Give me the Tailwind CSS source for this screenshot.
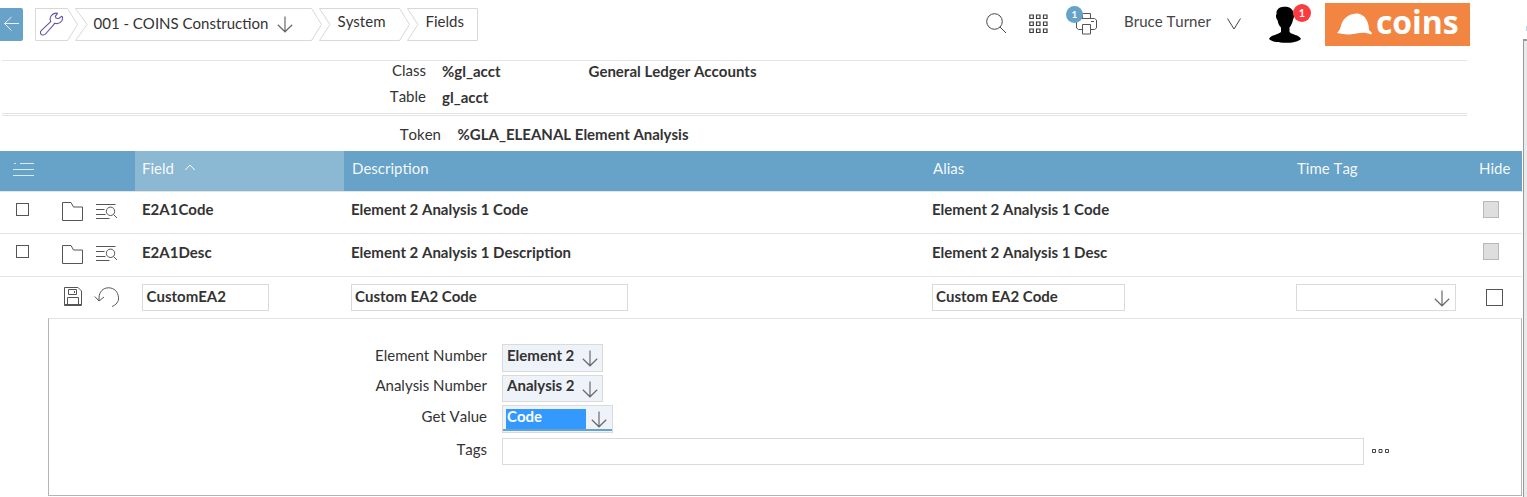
<!DOCTYPE html>
<html lang="en">
<head>
<meta charset="utf-8">
<title>Fields</title>
<script src="https://cdn.jsdelivr.net/npm/@tailwindcss/browser@4"></script>
</head>
<body class="bg-white overflow-hidden">
<svg class="hidden">
  <symbol id="down" viewBox="0 0 16 17"><path d="M8 .5V15.500M.8 8.800L8 15.800L15.200 8.800" fill="none" stroke="#6b6b6b" stroke-width="1.200"/></symbol>
  <symbol id="folder" viewBox="0 0 21 20"><path d="M.5 18.500V.5H9L11.500 5H20.500V18.500Z" fill="none" stroke="#555" stroke-width="1"/></symbol>
  <symbol id="find" viewBox="0 0 22 17"><path d="M0 1.500H19.500M0 6.500H8.500M0 11.500H9.500M0 15.500H13.500" fill="none" stroke="#555"/><circle cx="14.500" cy="8.300" r="4.200" fill="none" stroke="#555"/><path d="M17.500 11.500L21 15" stroke="#555"/></symbol>
</svg>
<div class="flex w-[1527px] h-[497px] font-['Lato',sans-serif] text-[15px] leading-5 text-[#333] whitespace-nowrap [font-kerning:none]">
  <main class="w-[1522px] h-full flex flex-col shrink-0">
    <header class="h-[60px] flex shrink-0">
      <div class="mt-2 w-[23px] h-[33px] bg-[#67a2c8] rounded-r-[2px] shrink-0">
        <svg class="w-[23px] h-[33px]" viewBox="0 0 23 33" fill="none" stroke="#e8f2f8" stroke-width="1"><path d="M19 15.500H4.500M11.500 9L4.500 15.500L11.500 22.500"/></svg>
      </div>
      <nav class="mt-2 ml-3 flex h-[33px] w-[443px] shrink-0">
        <div class="relative w-10">
          <svg class="absolute inset-0 overflow-visible" width="40" height="33" fill="none"><path d="M.5 .5H32.500L42.500 16.500L32.500 32.500H.5Z" stroke="#d8d8d8"/>
            <g transform="translate(5 4.500)" stroke="#6650a8" stroke-width="1.100" stroke-linejoin="round"><path d="M1.200 18.200L10.700 9.200C9.800 7.300 10 5.200 11 3.500C12.500 1.300 15 .2 17.500 .8L15.300 3.800L16.200 5.800L18.700 6L21.500 3.900C23 4 22.800 6.500 21.700 8.500C20.500 10.500 17.500 11.500 14.500 10.700L13.800 12.200L5.500 21.500C4.300 22.800 2.200 22.800 1.200 21.800C.2 20.800 .2 19.200 1.200 18.200Z"/></g>
          </svg>
        </div>
        <div class="relative w-[244px]">
          <svg class="absolute inset-0 overflow-visible" width="244" height="33" fill="none"><path d="M.5 .5H236.500L246.500 16.500L236.500 32.500H.5L12 16.500Z" stroke="#d8d8d8"/></svg>
          <div class="relative flex pl-[18.500px] pt-[5px]"><span class="w-[183.500px]">001 - COINS Construction</span><svg class="mt-[3px] w-4 h-[17px]"><use href="#down"/></svg></div>
        </div>
        <div class="relative w-[88px]">
          <svg class="absolute inset-0 overflow-visible" width="88" height="33" fill="none"><path d="M.5 .5H80.500L90.500 16.500L80.500 32.500H.5L11 16.500Z" stroke="#d8d8d8"/></svg>
          <div class="relative pl-[18.500px] pt-[3px]">System</div>
        </div>
        <div class="relative w-[71px]">
          <svg class="absolute inset-0 overflow-visible" width="71" height="33" fill="none"><path d="M.5 .5H70.500V32.500H.5L11 16.500Z" stroke="#d8d8d8"/></svg>
          <div class="relative pl-[18.500px] pt-[3px]">Fields</div>
        </div>
      </nav>
      <svg class="ml-[508px] mt-[13px] w-[21px] h-[21px] shrink-0" viewBox="0 0 21 21" fill="none" stroke="#444"><circle cx="8.500" cy="8.500" r="7.800"/><path d="M14 14L20 20"/></svg>
      <svg class="ml-[22px] mt-[14px] w-[19px] h-5 shrink-0" viewBox="0 0 19 20" fill="none" stroke="#3c3c3c" stroke-width="1.200"><path d="M.8 1h3.500v3.500H.8zM7.500 1h3.500v3.500H7.500zM14.500 1h3.500v3.500H14.500zM.8 8h3.500v3.500H.8zM7.500 8h3.500v3.500H7.500zM14.500 8h3.500v3.500H14.500zM.8 15h3.500v3.500H.8zM7.500 15h3.500v3.500H7.500zM14.500 15h3.500v3.500H14.500z"/></svg>
      <div class="relative ml-[18px] w-[34px] h-10 shrink-0">
        <svg class="absolute left-[10px] top-[13px]" width="23" height="22" fill="none" stroke="#555"><path d="M6.500 5.500V.5H14.500V5.500M6.500 16.500H2.500L.5 15V7L2.500 5.500H18.500L20.500 7V15L18.500 16.500H14.500M15 8.500H18M6.500 11.500H14.500V21H6.500Z"/></svg>
        <div class="absolute left-0 top-[6px] w-[17px] h-[17px] rounded-full bg-[#67a2c8] text-white font-bold text-[10px] leading-[16px] text-center">1</div>
      </div>
      <div class="ml-[24px] mt-[11px] w-[103px] text-[#444] shrink-0">Bruce Turner</div>
      <svg class="mt-[18px] w-[14px] h-3 shrink-0" viewBox="0 0 14 12" fill="none" stroke="#444"><path d="M.5 .5L7 11L13.500 .5"/></svg>
      <div class="relative ml-[27px] w-[44px] h-[50px] shrink-0">
        <svg class="absolute left-0 top-[6px]" width="34" height="37"><path d="M8.500 6C9.500 2 13 .8 17 .8C22 .8 25.500 3.500 25.500 8C26.500 9 26 12 25 13.500C24.500 17 23 19.500 21.500 21.500V26C24 29 31 28.500 33 33C30 36 24 36.800 17 36.800C10 36.800 4 36 1 33C3 28.500 10 29 13 26V21.500C11 19.500 10 17 9.500 14C8 12.500 7.500 9.500 8.500 8Z"/></svg>
        <div class="absolute left-[25px] top-1 w-[18px] h-[18px] rounded-full bg-[#fb3b3f] text-white font-bold text-[11px] leading-[17px] text-center">1</div>
      </div>
      <div class="ml-[13px] mt-[3px] w-[145px] h-[43px] bg-[#f38542] flex shrink-0 text-white">
        <svg class="ml-3 mt-[10px] w-[35px] h-[22px] shrink-0" viewBox="0 0 35 22" fill="#fff"><path d="M0 20C2.500 18 3.500 15 4.500 11C7 4 14 0 21 .5C28 1.500 32 9 32 17L35 20L34 21.500C29 19 24 19.500 18 20.800C12 22 6 21.500 0 20Z"/></svg>
        <div class="pl-[4px] font-['Open_Sans',sans-serif] font-bold text-[32px] leading-[38px] tracking-[-0.100px]">coins</div>
      </div>
    </header>

    <section class="ml-0.5 w-[1465px] h-[54px] border-t border-[#e4e4e4] shrink-0 flex flex-col">
      <div class="flex h-[26px] -mt-px"><span class="w-[424px] text-right">Class</span><span class="ml-4 mt-px w-[146.500px] font-bold">%gl_acct</span><span class="mt-px font-bold">General Ledger Accounts</span></div>
      <div class="flex"><span class="w-[424px] text-right">Table</span><span class="ml-4 mt-px font-bold">gl_acct</span></div>
    </section>
    <section class="w-[1467px] h-[37px] shrink-0">
      <div class="h-[3px] -mt-px ml-0.5 border-y border-[#e4e4e4]"></div>
      <div class="flex pt-[8px]"><span class="w-[441px] text-right">Token</span><span class="ml-[16.500px] font-bold">%GLA_ELEANAL Element Analysis</span></div>
    </section>

    <section class="shrink-0">
      <div class="flex h-10 bg-[#67a2c8] text-white/95">
        <svg class="ml-[13px] mt-[11px] w-[22px] h-4" viewBox="0 0 22 16" stroke="#d9ebf5"><path d="M1 1.500H3M7 1.500H21M0 7.500H21M0 13.500H21"/></svg>
        <div class="ml-[100px] w-[209px] bg-[#8bb8d3] flex pl-[7px] pt-[7px]">Field<svg class="ml-[11px] mt-[6px] w-[10px] h-[7px]" viewBox="0 0 10 7" fill="none" stroke="#fff"><path d="M.3 6L5 1L9.700 6"/></svg></div>
        <div class="w-[581px] pl-2 pt-[7px]">Description</div>
        <div class="w-[364px] pl-2 pt-[7px]">Alias</div>
        <div class="w-[182px] pl-2 pt-[7px]">Time Tag</div>
        <div class="pl-2 pt-[7px]">Hide</div>
      </div>
      <div class="flex h-[43px] border-b border-t border-[#e4e4e4] font-bold">
        <div class="w-[13px] h-[13px] border border-[#555] ml-4 mt-[11px]"></div>
        <svg class="ml-[33px] mt-[10px] w-[21px] h-5"><use href="#folder"/></svg>
        <svg class="ml-[13px] mt-[11px] w-[22px] h-[17px]"><use href="#find"/></svg>
        <div class="ml-[24px] w-[209px] pt-[7px]">E2A1Code</div>
        <div class="w-[581px] pt-[7px]">Element 2 Analysis 1 Code</div>
        <div class="w-[551px] pt-[7px]">Element 2 Analysis 1 Code</div>
        <div class="w-4 h-[17px] mt-[9px] border border-[#b8b8b8] bg-[#dedede]"></div>
      </div>
      <div class="flex h-[43px] border-b border-[#e4e4e4] font-bold">
        <div class="w-[13px] h-[13px] border border-[#555] ml-4 mt-[11px]"></div>
        <svg class="ml-[33px] mt-[11px] w-[21px] h-5"><use href="#folder"/></svg>
        <svg class="ml-[13px] mt-[11px] w-[22px] h-[17px]"><use href="#find"/></svg>
        <div class="ml-[24px] w-[209px] pt-[8px]">E2A1Desc</div>
        <div class="w-[581px] pt-[8px]">Element 2 Analysis 1 Description</div>
        <div class="w-[551px] pt-[8px]">Element 2 Analysis 1 Desc</div>
        <div class="w-4 h-[17px] mt-[9px] border border-[#b8b8b8] bg-[#dedede]"></div>
      </div>
      <div class="flex h-[41px] font-bold">
        <svg class="ml-[64px] mt-[10px] w-[18px] h-[20px] shrink-0" viewBox="0 0 18 20" fill="none" stroke="#555"><path d="M.5 .5H14L17.500 4V18.500H.5ZM4.500 2.500H12.500V7.500H4.500ZM10.500 4V6M3.500 17.500V10.500H14.500V17.500ZM1 17.500H17"/></svg>
        <svg class="ml-3 mt-[10px] w-[26px] h-[21px] shrink-0" viewBox="0 0 26 21" fill="none" stroke="#555"><path d="M18 19.500C22 18 25 14.500 24.500 10.500C24 4.500 20 .8 14.500 .8C9 .8 5 5 5 11V14M.8 9.500L5 14L10 10"/></svg>
        <div class="ml-[22px] mt-[7px] w-[127px] h-[27px] border border-[#dadada] pl-[3.500px] pt-[1px]">CustomEA2</div>
        <div class="ml-[82px] mt-[7px] w-[277px] h-[27px] border border-[#dadada] pl-[3px] pt-[1px]">Custom EA2 Code</div>
        <div class="ml-[304px] mt-[7px] w-[193px] h-[27px] border border-[#dadada] pl-[3px] pt-[1px]">Custom EA2 Code</div>
        <div class="ml-[171px] mt-[7px] w-[160px] h-[27px] border border-[#dadada] flex justify-end pr-[5px] pt-[5px]"><svg class="w-4 h-[17px]"><use href="#down"/></svg></div>
        <div class="ml-[30px] mt-3 w-[17px] h-[17px] border border-[#555]"></div>
      </div>
    </section>

    <section class="ml-12 w-[1474px] h-[178px] border border-t-[#e4e4e4] border-[#b4b4b4] shrink-0 flex flex-col pt-[25px]">
      <div class="flex h-[31px]"><span class="w-[438px] text-right pt-[1px]">Element Number</span>
        <div class="ml-[15px] w-[101px] h-[28px] border border-[#dadada] bg-[#eef2f9] flex pl-[4px] font-bold"><span class="w-[75px]">Element 2</span><svg class="mt-[5px] w-4 h-[17px]"><use href="#down"/></svg></div></div>
      <div class="flex h-[30px]"><span class="w-[438px] text-right">Analysis Number</span>
        <div class="ml-[15px] w-[101px] h-[27px] border border-[#dadada] bg-[#eef2f9] flex pl-[4px] font-bold"><span class="w-[75px] -mt-px">Analysis 2</span><svg class="mt-[5px] w-4 h-[17px]"><use href="#down"/></svg></div></div>
      <div class="flex h-[33px]"><span class="w-[438px] text-right pt-[1px]">Get Value</span>
        <div class="ml-[15px] w-[111px] h-[28px] border border-[#dadada] bg-[#eef2f9] flex pl-[3px] font-bold relative"><span class="w-[80px] mt-[3px] h-5 bg-[#3399ff] text-white pl-px leading-[14px]">Code</span><svg class="ml-[5px] mt-[5px] w-4 h-[17px]"><use href="#down"/></svg><div class="absolute left-0 right-0 bottom-px h-[2px] bg-[#67a2c8]"></div></div></div>
      <div class="flex"><span class="w-[438px] text-right pt-[1px]">Tags</span>
        <div class="ml-[15px] w-[862px] h-[27px] border border-[#dadada]"></div>
        <svg class="ml-2 mt-[11px] w-[17px] h-[4px]" viewBox="0 0 17 4" fill="none" stroke="#444"><path d="M.5 .5h3v3h-3zM7 .5h3v3H7zM13.500 .5h3v3h-3z"/></svg></div>
    </section>
  </main>
  <aside class="flex flex-col items-end w-[5px] shrink-0">
    <div class="mt-[26px] w-px h-[5px] bg-[#b9dcea]"></div>
    <div class="mt-[8px] w-1 h-[458px] border-l border-t-2 border-[#999] bg-[#eaeaea]"></div>
  </aside>
</div>
</body>
</html>
